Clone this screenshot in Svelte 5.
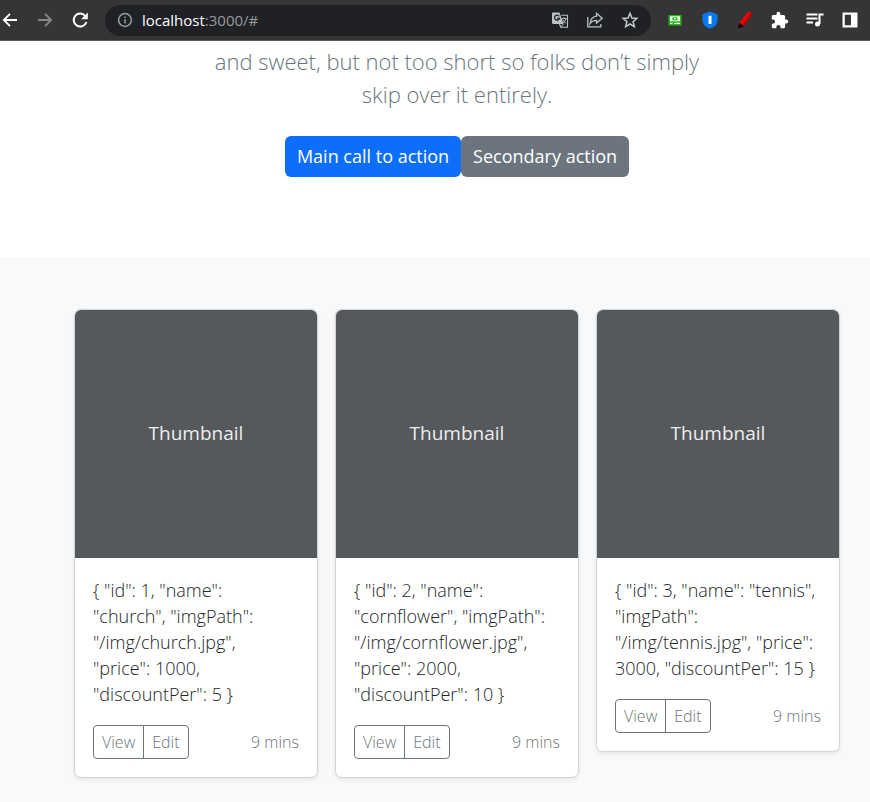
<script>
  const products = [
    { id: 1, name: 'church', imgPath: '/img/church.jpg', price: 1000, discountPer: 5 },
    { id: 2, name: 'cornflower', imgPath: '/img/cornflower.jpg', price: 2000, discountPer: 10 },
    { id: 3, name: 'tennis', imgPath: '/img/tennis.jpg', price: 3000, discountPer: 15 }
  ];

  const format = (p) =>
    '{ ' + Object.entries(p).map(([k, v]) => `"${k}": ${JSON.stringify(v)}`).join(', ') + ' }';
</script>

<header class="toolbar">
  <nav class="nav" aria-label="Navigation">
    <button aria-label="Back">
      <svg width="20" height="20" viewBox="0 0 20 20" fill="none" stroke="#fff" stroke-width="1.8"><path d="M17 10H4M10 3.800 3.800 10l6.200 6.200" /></svg>
    </button>
    <button aria-label="Forward">
      <svg width="20" height="20" viewBox="0 0 20 20" fill="none" stroke="#87888a" stroke-width="1.800"><path d="M3 10h13M10 3.800l6.200 6.200-6.200 6.200" /></svg>
    </button>
    <button aria-label="Reload">
      <svg width="20" height="20" viewBox="0 0 20 20"><path d="M15.500 6.300A6.500 6.500 0 1 0 16.400 12" fill="none" stroke="#fff" stroke-width="2" /><path d="M17.800 2.500v6.700h-6.700z" fill="#fff" /></svg>
    </button>
  </nav>

  <div class="address">
    <svg width="16" height="16" viewBox="0 0 16 16" fill="none" stroke="#9aa0a6" stroke-width="1.500"><circle cx="8" cy="8" r="6.400" /><path d="M8 7.200v4.300M8 4.400v1.600" /></svg>
    <span class="url"><b>localhost</b>:3000/#</span>
    <button aria-label="Translate this page">
      <svg width="18" height="18" viewBox="0 0 18 18">
        <path d="M2 1.500h6.500L12.500 13H2.500A1.500 1.500 0 0 1 1 11.500v-9a1 1 0 0 1 1-1z" fill="#bdc1c6" />
        <path d="M8.200 5.300A2.500 2.500 0 1 0 8.500 7.300H6.200" fill="none" stroke="#202124" stroke-width="1.300" />
        <path d="M10.500 4.300H16.500v11.900H9.700L8.500 13" fill="none" stroke="#bdc1c6" stroke-width="1.100" />
        <path d="M10.700 7.600h5M13 6.300v1.300M14.800 7.800c-.5 2-1.500 3.300-3 4.400M11.800 8.800c.8 1.500 1.800 2.600 3.300 3.500M9.500 16.200l3-3.200" fill="none" stroke="#bdc1c6" stroke-width="1" />
      </svg>
    </button>
    <button aria-label="Share this page">
      <svg width="18" height="18" viewBox="0 0 18 18" fill="none" stroke="#bdc1c6" stroke-width="1.300"><path d="M1.800 6v9.800h13V13" /><path d="M10.500 2.300l5.700 4.900-5.700 4.900V9.300C7.500 9.300 5.500 10.400 4 12.700 4.300 8.500 6.500 5.700 10.500 5.100z" /></svg>
    </button>
    <button aria-label="Bookmark this page">
      <svg width="18" height="18" viewBox="0 0 18 18" fill="none" stroke="#c4c7cb" stroke-width="1.500"><path d="M9 2.300l1.900 4.700 5 .4-3.800 3.300 1.200 4.900L9 13l-4.300 2.600 1.200-4.900-3.800-3.300 5-.4z" /></svg>
    </button>
  </div>

  <div class="extensions">
    <button aria-label="Capture extension">
      <svg width="18" height="18" viewBox="0 0 18 18"><path d="M2.500 4h13v10.500h-13z" fill="#27b51e" /><path d="M4 5.300h10v5H4zM4 11.700h2.500v1.300H4zM8 11.700h6v1.300H8z" fill="#e8ffe5" /><path d="M6.500 6.300h5v3h-5z" fill="#27b51e" /><path d="M8 7h2v1.200H8z" fill="#fff" /></svg>
    </button>
    <button aria-label="Shield extension">
      <svg width="18" height="18" viewBox="0 0 18 18"><path d="M9 .4l7.500 2.800v6c0 4-3 7-7.500 8.500C4.500 16.200 1.500 13.200 1.500 9.200v-6z" fill="#0879f5" /><path d="M7.500 4.800h3V13h-3z" fill="#fff" /></svg>
    </button>
    <button aria-label="Marker extension">
      <svg width="18" height="18" viewBox="0 0 18 18"><path d="M11.500 1h3.200l1.600 1.900L8 15l-4.800-3z" fill="#e40909" /><path d="M15.200 1.500l1.100 1.400L8 15l-1.500-1z" fill="#a90707" /><path d="M3.200 12l4.800 3-5 2.500-1-1z" fill="#160707" /></svg>
    </button>
    <button aria-label="Extensions">
      <svg width="18" height="18" viewBox="1 0 23 23" fill="#fff"><path d="M20.500 11H19V7c0-1.100-.9-2-2-2h-4V3.500a2.500 2.500 0 0 0-5 0V5H4c-1.100 0-2 .9-2 2v3.800h1.500a2.700 2.700 0 0 1 0 5.400H2V20c0 1.100.9 2 2 2h3.800v-1.500a2.700 2.700 0 0 1 5.400 0V22H17c1.100 0 2-.9 2-2v-4h1.500a2.500 2.500 0 0 0 0-5z" /></svg>
    </button>
    <button aria-label="Media controls">
      <svg width="18" height="18" viewBox="1 1 18 18" fill="none" stroke="#fff" stroke-width="1.800"><path d="M1.500 4.500h11M1.500 8.500h11M1.500 12.500h6.500" /><path d="M14.500 14V4.400H18.500" stroke-width="2" /><circle cx="12.500" cy="14" r="2.500" fill="#fff" stroke="none" /></svg>
    </button>
    <button aria-label="Side panel">
      <svg width="18" height="18" viewBox="0 0 18 18"><path d="M1.500 1.500h15v15h-15z" fill="#fff" /><path d="M3.800 3.800h6.200v10.400H3.800z" fill="#353535" /></svg>
    </button>
  </div>
</header>

<main>
  <section class="hero">
    <p>and sweet, but not too short so folks don’t simply<br />skip over it entirely.</p>
    <div class="actions">
      <a class="primary" href="#main">Main call to action</a>
      <a class="secondary" href="#secondary">Secondary action</a>
    </div>
  </section>

  <section class="album">
    {#each products as product (product.id)}
      <article class="card">
        <div class="thumb">Thumbnail</div>
        <div class="body">
          <p>{format(product)}</p>
          <div class="foot">
            <div class="group">
              <button>View</button>
              <button>Edit</button>
            </div>
            <small>9 mins</small>
          </div>
        </div>
      </article>
    {/each}
  </section>
</main>

<style>
  :global(body) {
    margin: 0;
    background: #f8f9fa;
    font-family: 'Open Sans', 'Noto Sans', sans-serif;
    color: #212529;
  }
  * {
    box-sizing: border-box;
  }
  p {
    margin: 0;
  }
  button {
    font: inherit;
    cursor: pointer;
  }
  svg {
    display: block;
  }

  .toolbar {
    display: flex;
    align-items: center;
    height: 41px;
    background: #353535;
    border-bottom: 1px solid #5c5c5e;
  }
  .toolbar button {
    display: flex;
    padding: 0;
    border: 0;
    background: none;
  }
  .nav {
    display: flex;
    gap: 15px;
    padding-right: 15px;
  }
  .address {
    flex: 1;
    display: flex;
    align-items: center;
    gap: 17px;
    height: 31px;
    padding: 0 12px;
    border-radius: 16px;
    background: #202124;
  }
  .url {
    flex: 1;
    margin-left: -8px;
    font-size: 15px;
    color: #969a9f;
  }
  .url b {
    font-weight: 400;
    color: #fff;
  }
  .extensions {
    display: flex;
    align-items: center;
    gap: 17px;
    padding: 0 11px 0 15px;
  }

  .hero {
    padding: 4px 30px 80px 74px;
    background: #fff;
    text-align: center;
  }
  .hero p {
    font-size: 22px;
    line-height: 33px;
    font-weight: 300;
    color: #6c757d;
  }
  .actions {
    display: flex;
    justify-content: center;
    padding-top: 25px;
  }
  .actions a {
    padding: 0 12px;
    border-radius: 6px;
    font-size: 18px;
    line-height: 41px;
    color: #fff;
    text-decoration: none;
  }
  .primary {
    background: #0d6efd;
  }
  .secondary {
    background: #6c757d;
  }

  .album {
    display: grid;
    grid-template-columns: repeat(3, 1fr);
    align-items: start;
    gap: 17px;
    padding: 52px 30px 24px 74px;
  }
  .card {
    overflow: hidden;
    border: 1px solid #d2d3d4;
    border-radius: 7px;
    background: #fff;
    box-shadow: 0 2px 4px rgba(0, 0, 0, 0.08);
  }
  .thumb {
    display: flex;
    align-items: center;
    justify-content: center;
    height: 248px;
    padding-bottom: 2px;
    background: #55595c;
    color: #eceeef;
    font-size: 19px;
  }
  .body {
    padding: 19px 18px 18px;
  }
  .body p {
    padding-right: 3px;
    font-size: 18px;
    line-height: 26px;
    font-weight: 300;
  }
  .foot {
    display: flex;
    align-items: center;
    justify-content: space-between;
    padding-top: 18px;
    font-size: 16px;
    font-weight: 300;
    color: #6c757d;
  }
  .group {
    display: flex;
  }
  .group button {
    height: 34px;
    padding: 0 8px;
    border: 1px solid #6c757d;
    background: #fff;
    color: #6c757d;
  }
  .group button:first-child {
    border-radius: 4px 0 0 4px;
  }
  .group button:last-child {
    margin-left: -1px;
    border-radius: 0 4px 4px 0;
  }
  small {
    font-size: 16px;
  }
</style>
